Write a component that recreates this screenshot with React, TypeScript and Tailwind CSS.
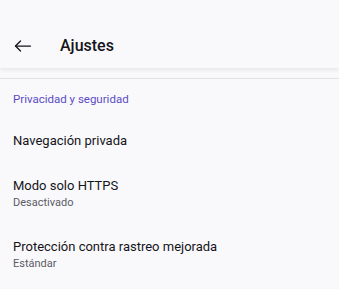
import React from "react";

export default function App() {
  return (
    <div className="w-[339px] h-[289px] bg-[#f9f9fb] overflow-hidden text-[#15141a]" style={{ fontFamily: "Roboto, 'Noto Sans', sans-serif" }}>
      <div className="h-[68px] flex items-end bg-[#f9f9fb] shadow-[0_2px_4px_rgba(0,0,0,0.08)] relative">
        <div className="h-[44px] w-full flex items-center">
          <div className="w-[60px] flex items-center pl-[13px]">
            <svg width="20" height="20" viewBox="0 0 24 24" fill="none" stroke="#15141a" strokeWidth="1.5" strokeLinecap="round" strokeLinejoin="round">
              <path d="M21 12H3" />
              <path d="M9 6l-6 6 6 6" />
            </svg>
          </div>
          <span className="text-[16px] font-medium">Ajustes</span>
        </div>
      </div>
      <div className="h-[10px]" />
      <div className="h-px bg-[#e3e3e6]" />
      <div className="px-[13px] pt-[1px]">
        <div className="h-[40px] flex items-center text-[11.5px] text-[#5b4bc4]">Privacidad y seguridad</div>
        <div className="h-[42px] flex items-center text-[13px]">Navegación privada</div>
        <div className="h-[62px] flex flex-col justify-center">
          <div className="text-[13px] leading-[18px]">Modo solo HTTPS</div>
          <div className="text-[11px] leading-[15px] text-[#5b5b66]">Desactivado</div>
        </div>
        <div className="h-[60px] flex flex-col justify-center">
          <div className="text-[13px] leading-[18px]">Protección contra rastreo mejorada</div>
          <div className="text-[11px] leading-[15px] text-[#5b5b66]">Estándar</div>
        </div>
      </div>
    </div>
  );
}
